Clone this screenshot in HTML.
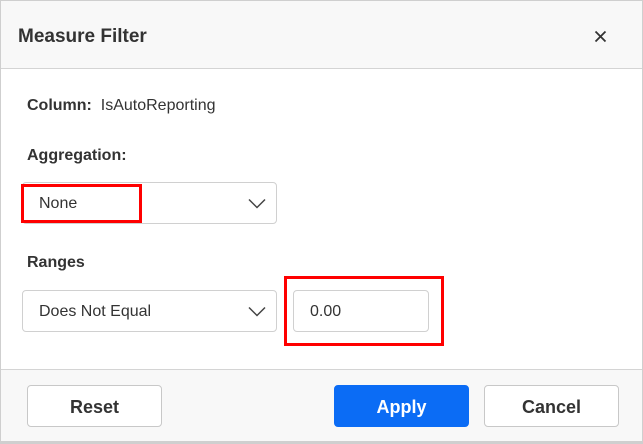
<!DOCTYPE html>
<html><head><style>
*{box-sizing:border-box;margin:0;padding:0}
body{width:643px;height:444px;background:#fff;font-family:"Liberation Sans",sans-serif;color:#333;position:relative;overflow:hidden}
.frame{position:absolute;left:0;top:0;width:643px;height:444px;border:1px solid #cfcfcf;border-bottom:3px solid #cfcfcf}
.hdr{position:absolute;left:1px;top:1px;width:641px;height:68px;background:#f8f8f8;border-bottom:1px solid #d4d4d4}
.abs{position:absolute}
.b{font-weight:bold}
.box{position:absolute;border:1px solid #d0d0d0;border-radius:4px;background:#fff}
.red{position:absolute;border:3px solid #f00}
.foot{position:absolute;left:1px;top:369px;width:641px;height:72px;background:#f8f8f8;border-top:1px solid #d4d4d4}
.btn{position:absolute;top:385px;width:135px;height:42px;border:1px solid #c8c8c8;border-radius:4px;background:#fff;font-size:18px;font-weight:bold;text-align:center;line-height:42px;color:#333}
</style></head><body>
<div class="hdr"></div>
<div class="frame"></div>
<div class="abs b" style="left:18px;top:26px;font-size:19px;color:#333">Measure Filter</div>
<svg class="abs" style="left:594px;top:30px" width="13" height="13" viewBox="0 0 13 13"><path d="M1.5 1.5L11.5 11.5M11.5 1.5L1.5 11.5" stroke="#333" stroke-width="1.8"/></svg>
<div class="abs" style="left:27px;top:97px;font-size:16px"><span class="b">Column:</span>&nbsp; IsAutoReporting</div>
<div class="abs b" style="left:27px;top:147px;font-size:16px">Aggregation:</div>
<div class="box" style="left:22px;top:182px;width:255px;height:42px"></div>
<div class="abs" style="left:39px;top:195px;font-size:16px">None</div>
<svg class="abs" style="left:248px;top:198px" width="18" height="11" viewBox="0 0 18 11"><path d="M1 1.5L9 9.5L17 1.5" fill="none" stroke="#444" stroke-width="1.5"/></svg>
<div class="red" style="left:21px;top:184px;width:121px;height:39px"></div>
<div class="abs b" style="left:27px;top:254px;font-size:16px">Ranges</div>
<div class="box" style="left:22px;top:290px;width:255px;height:42px"></div>
<div class="abs" style="left:39px;top:303px;font-size:16px">Does Not Equal</div>
<svg class="abs" style="left:248px;top:306px" width="18" height="11" viewBox="0 0 18 11"><path d="M1 1.5L9 9.5L17 1.5" fill="none" stroke="#444" stroke-width="1.5"/></svg>
<div class="box" style="left:293px;top:290px;width:136px;height:42px"></div>
<div class="abs" style="left:310px;top:303px;font-size:16px">0.00</div>
<div class="red" style="left:284px;top:276px;width:160px;height:70px"></div>
<div class="foot"></div>
<div class="btn" style="left:27px">Reset</div>
<div class="btn" style="left:334px;background:#0b6cf5;border-color:#0b6cf5;color:#fff">Apply</div>
<div class="btn" style="left:484px">Cancel</div>
</body></html>
